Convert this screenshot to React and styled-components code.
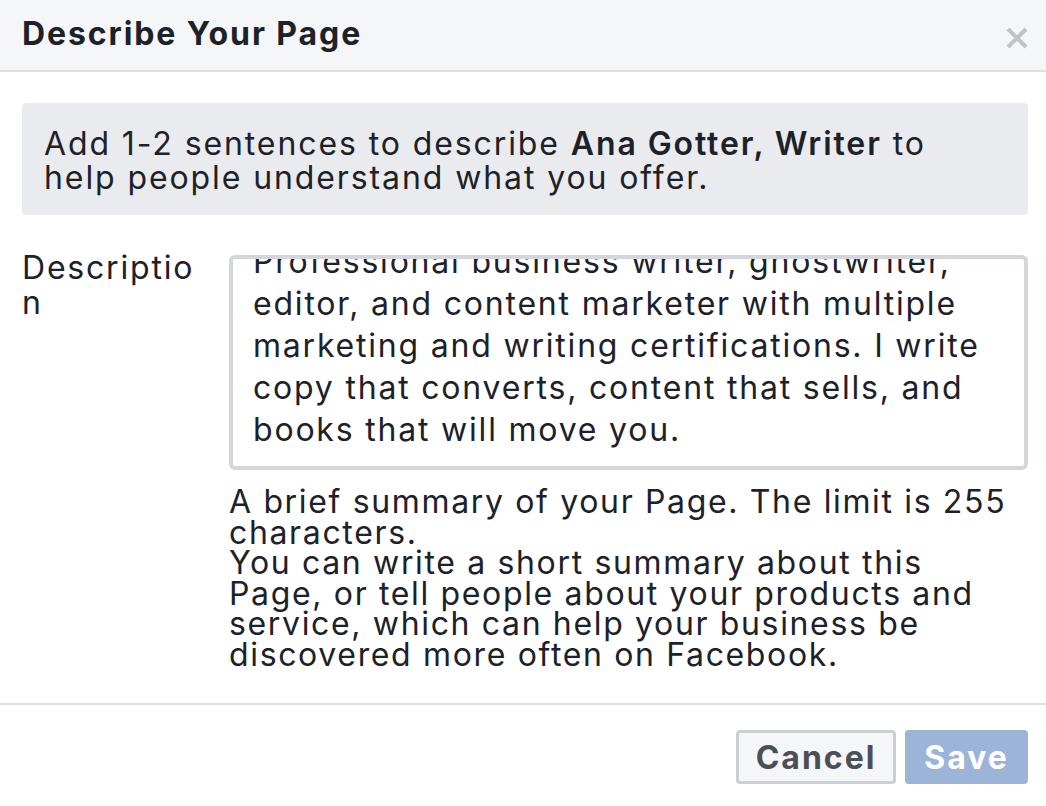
import React, { useEffect, useRef } from "react";
import styled, { createGlobalStyle } from "styled-components";

const FONT = `Inter, "Liberation Sans", Arial, sans-serif`;

const Global = createGlobalStyle`
  html, body { margin: 0; padding: 0; background: #ffffff; }
  body { font-family: ${FONT}; color: #1d2129; }
  * { box-sizing: border-box; }
`;

const Dialog = styled.div`
  width: 1046px;
  height: 806px;
  display: flex;
  flex-direction: column;
  background: #fff;
  overflow: hidden;
`;

const Header = styled.div`
  height: 72px;
  flex: none;
  background: #f5f6f7;
  border-bottom: 2px solid #dddfe2;
  display: flex;
  align-items: flex-start;
  justify-content: space-between;
  padding: 0 18px 0 22px;
  overflow: hidden;
`;

const Title = styled.h1`
  margin: 0;
  margin-top: 15px;
  font-size: 32px;
  line-height: 38px;
  font-weight: 700;
  color: #1d2129;
  letter-spacing: 1.9px;
`;

const Close = styled.button`
  border: 0;
  background: none;
  padding: 0;
  margin-top: 27px;
  width: 22px;
  height: 22px;
  display: flex;
  align-items: center;
  justify-content: center;
  cursor: pointer;
`;

const Body = styled.div`
  padding: 31px 18px 0 22px;
  flex: 1;
`;

const Info = styled.div`
  background: #e9ebee;
  border-radius: 4px;
  padding: 24px 22px 20px 22px;
  font-size: 32px;
  line-height: 34px;
  letter-spacing: 1.9px;
  color: #1d2129;
  b { font-weight: 600; }
`;

const Row = styled.div`
  display: flex;
  align-items: flex-start;
  margin-top: 35px;
`;

const Label = styled.div`
  width: 207px;
  flex: none;
  font-size: 32px;
  line-height: 35px;
  letter-spacing: 1.8px;
  overflow-wrap: anywhere;
  padding-right: 22px;
`;

const Field = styled.div`
  flex: 1;
  min-width: 0;
  padding-top: 5px;
`;

const Area = styled.textarea`
  display: block;
  width: 100%;
  height: 215px;
  border: 4px solid #d3d6db;
  border-radius: 6px;
  padding: 0 30px 22px 20px;
  font-family: ${FONT};
  font-size: 32px;
  line-height: 42px;
  letter-spacing: 1.8px;
  color: #1d2129;
  resize: none;
  overflow: hidden;
  outline: none;
  background: #fff;
`;

const Help = styled.div`
  margin-top: 17px;
  max-width: 785px;
  font-size: 32px;
  line-height: 30.5px;
  letter-spacing: 1.65px;
  color: #1d2129;
`;

const Footer = styled.div`
  flex: none;
  border-top: 2px solid #dddfe2;
  height: 103px;
  display: flex;
  justify-content: flex-end;
  align-items: flex-start;
  gap: 9px;
  padding: 25px 18px 0 0;
`;

const Button = styled.button`
  height: 54px;
  width: ${(p) => p.$w}px;
  padding: 0;
  border-radius: 4px;
  border: 3px solid ${(p) => (p.$primary ? "#9cb4d8" : "#ccd0d5")};
  background: ${(p) => (p.$primary ? "#9cb4d8" : "#f5f6f7")};
  color: ${(p) => (p.$primary ? "#ffffff" : "#4b4f56")};
  font-family: ${FONT};
  font-weight: 700;
  font-size: 32px;
  letter-spacing: 2px;
  cursor: pointer;
`;

const text =
  "Professional business writer, ghostwriter, editor, and content marketer with multiple marketing and writing certifications. I write copy that converts, content that sells, and books that will move you.";

export default function App() {
  const ref = useRef(null);
  useEffect(() => {
    if (ref.current) ref.current.scrollTop = 18;
  }, []);
  return (
    <Dialog>
      <Global />
      <Header>
        <Title>Describe Your Page</Title>
        <Close aria-label="Close">
          <svg width="22" height="22" viewBox="0 0 22 22">
            <path d="M2 2L20 20M20 2L2 20" stroke="#bec2c9" strokeWidth="4" />
          </svg>
        </Close>
      </Header>
      <Body>
        <Info>
          Add 1-2 sentences to describe <b>Ana Gotter, Writer</b> to help people understand what you offer.
        </Info>
        <Row>
          <Label>Description</Label>
          <Field>
            <Area ref={ref} defaultValue={text} />
            <Help>
              A brief summary of your Page. The limit is 255 characters.
              <br />
              You can write a short summary about this Page, or tell people about your products and service, which can help your business be discovered more often on Facebook.
            </Help>
          </Field>
        </Row>
      </Body>
      <Footer>
        <Button $w={160}>Cancel</Button>
        <Button $primary $w={123}>Save</Button>
      </Footer>
    </Dialog>
  );
}
